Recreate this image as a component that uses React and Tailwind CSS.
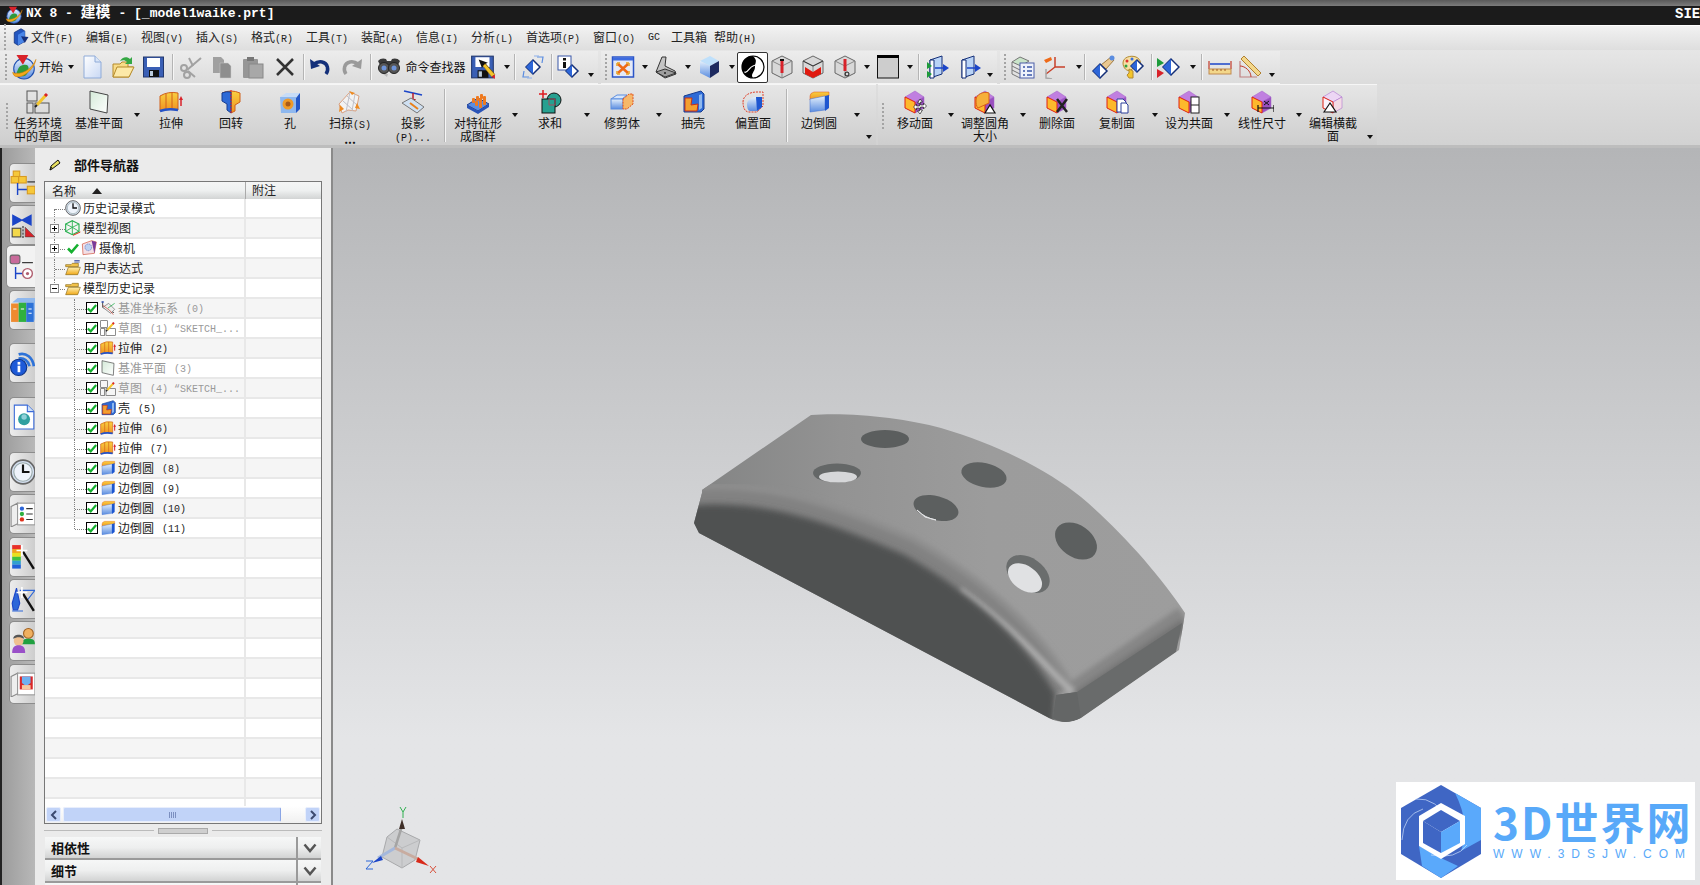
import React from 'react'

const Svg = ({ s = 24, children }) => (
  <svg width={s} height={s} viewBox="0 0 24 24" className="shrink-0">{children}</svg>
)

// toolbar icons
const Nx = ({ s = 26 }) => (
  <Svg s={s}>
    <circle cx="12" cy="13.5" r="9.5" fill="url(#gb)" stroke="#1f4fb0" />
    <path d="M5 18c2-5 2-7 7-8s5 4 3 8-8 3-10 0z" fill="#2f9a3c" />
    <path d="M1.5 17C8 20 19 15 23 5c-1 7-9 16-17 16-3 0-4-2-4.500-4z" fill="#f5a81c" stroke="#c97a08" strokeWidth=".5" />
    <path d="M5 1h11l-5 9z" fill="#d8222a" />
  </Svg>
)
const MenuIcon = () => (
  <Svg s={18}>
    <path d="M3 6l9-5 5 3v14l-9 5-5-3z" fill="#2256c0" stroke="#122f78" />
    <path d="M8 9l9-5v14l-9 5z" fill="#4a86e8" />
    <path d="M12 11l10 1-5 8z" fill="#16307c" />
  </Svg>
)
const NewDoc = () => (
  <Svg><path d="M4 1h11l6 6v16H4z" fill="url(#gd)" stroke="#8fabd8" /><path d="M15 1v6h6" fill="#d9e5f7" stroke="#8fabd8" /></Svg>
)
const OpenF = () => (
  <Svg>
    <path d="M2 9h7l2-2h6v5h5l-4 10H2z" fill="#f8dc88" stroke="#b58a2a" />
    <path d="M2 22l4-10h17l-5 10z" fill="#fce9a8" stroke="#b58a2a" />
    <path d="M9 6c2-4 7-5 10-2l2-2v7h-7l2-2c-2-2-4-2-7-1z" fill="#35a844" />
  </Svg>
)
const Floppy = () => (
  <>
    <rect x="1.500" y="2" width="20" height="20" fill="#3a5fb5" stroke="#22386e" />
    <rect x="5" y="3" width="13" height="9" fill="#fff" />
    <rect x="7" y="15" width="10" height="7" fill="#111" />
    <rect x="8" y="16" width="3" height="5" fill="#bcd" />
  </>
)
const Save = () => <Svg><Floppy /></Svg>
const SavePen = () => (
  <Svg s={26}>
    <Floppy />
    <path d="M8 5l3 8 1.500-2 8 9 2-2-8-9 2-1z" fill="#111" />
    <path d="M12 11l8 10 3-2-9-10z" fill="#f3c52c" stroke="#a36f08" strokeWidth=".5" />
    <path d="M20 21l3 2v-4z" fill="#d8222a" />
  </Svg>
)
const Cut = () => (
  <Svg>
    <path d="M8 15L22 3M9 16l7 6" stroke="#a2a2a2" strokeWidth="2" />
    <path d="M14 11l-4-8" stroke="#a2a2a2" strokeWidth="2" />
    <circle cx="5" cy="13" r="3" fill="none" stroke="#a2a2a2" strokeWidth="2" />
    <circle cx="8" cy="20" r="3" fill="none" stroke="#a2a2a2" strokeWidth="2" />
  </Svg>
)
const Copy = () => (
  <Svg>
    <path d="M3 2h8l3 3v13H3z" fill="#a0a0a0" />
    <path d="M10 8h8l3 3v12H10z" fill="#8e8e8e" stroke="#c8c8c8" strokeWidth=".5" />
  </Svg>
)
const Paste = () => (
  <Svg>
    <rect x="2" y="4" width="15" height="19" rx="1" fill="#969696" />
    <rect x="6" y="2" width="7" height="4" fill="#777" />
    <rect x="8" y="9" width="14" height="14" fill="#a8a8a8" stroke="#888" />
  </Svg>
)
const Del = () => (
  <Svg><path d="M4 4l16 16M20 4L4 20" stroke="#333" strokeWidth="2.500" /></Svg>
)
const Undo = ({ c = '#14307a' }) => (
  <Svg>
    <path d="M18 19c3-4 2-11-4-12-3-.5-6 .5-8 2" fill="none" stroke={c} strokeWidth="3.500" />
    <path d="M2 4l1 10 9-3z" fill={c} />
  </Svg>
)
const Redo = () => (
  <Svg>
    <path d="M6 19c-3-4-2-11 4-12 3-.5 6 .5 8 2" fill="none" stroke="#9a9a9a" strokeWidth="3.500" />
    <path d="M22 4l-1 10-9-3z" fill="#9a9a9a" />
  </Svg>
)
const Binoc = () => (
  <Svg>
    <path d="M1 6c2-3 6-3 8-2l1 2h4l1-2c2-1 6-1 8 2l-2 4H3z" fill="#3a3a3a" />
    <circle cx="7" cy="13" r="5.500" fill="#555" stroke="#222" />
    <circle cx="17" cy="13" r="5.500" fill="#555" stroke="#222" />
    <circle cx="7" cy="13" r="2.500" fill="#6d93d8" />
    <circle cx="17" cy="13" r="2.500" fill="#6d93d8" />
    <path d="M6 19l4 3 1-3z" fill="#bbb" />
  </Svg>
)
const Diamond = ({ x = 12, y = 12, r = 7 }) => (
  <>
    <path d={`M${x - r} ${y}L${x} ${y - r}L${x + r} ${y}L${x} ${y + r}Z`} fill="#fff" stroke="#142f78" strokeWidth="1.500" />
    <path d={`M${x - r} ${y}L${x} ${y - r}V${y + r}Z`} fill="#2d66d8" />
  </>
)
const Rotate = () => (
  <Svg>
    <Diamond r={7} />
    <path d="M16 2l6 0-1 6M8 22l-6 0 1-6" fill="none" stroke="#5b8de0" strokeWidth="1.200" />
    <path d="M13 1h5M6 23h5" stroke="#8fb1ea" strokeWidth="1" />
  </Svg>
)
const Info = () => (
  <Svg>
    <rect x="1" y="1" width="13" height="14" fill="#fff" stroke="#3856a8" />
    <rect x="6" y="3" width="3" height="2.500" fill="#111" />
    <rect x="6" y="7" width="3" height="6" fill="#111" />
    <Diamond x={15} y={16} r={6} />
  </Svg>
)
const Fit = () => (
  <Svg>
    <rect x="1.500" y="2" width="21" height="20" fill="#e4e9f7" stroke="#2b55c8" strokeWidth="1.500" />
    <rect x="2" y="2.500" width="20" height="3" fill="#3d6be0" />
    <path d="M7 9l10 9M17 9L7 18" stroke="#ee6a18" strokeWidth="2.500" />
    <path d="M6 8h3M6 8v3M18 8h-3M18 8v3M6 19h3M6 19v-3M18 19h-3M18 19v-3" stroke="#e8a020" strokeWidth="1.500" />
  </Svg>
)
const Cam3 = () => (
  <Svg>
    <path d="M2 17l6-15h4l-1 9 10 5 1 3-11 4z" fill="#c4c4c4" stroke="#333" />
    <path d="M2 17l9 5 11-4-11-4z" fill="#9d9d9d" stroke="#333" />
    <circle cx="11" cy="18" r="1" fill="#222" />
  </Svg>
)
const Cube = () => (
  <Svg>
    <path d="M3 6l10-5 9 5-9 5z" fill="#bfe0fb" />
    <path d="M3 6l10 5v12L3 18z" fill="url(#gb)" />
    <path d="M13 11l9-5v11l-9 6z" fill="#1d2a60" />
  </Svg>
)
const Wave = () => (
  <Svg>
    <circle cx="12" cy="12" r="11" fill="#000" />
    <path d="M12 1a11 11 0 0 1 0 22c-3-4 2-6 2-11s3-6-2-11z" fill="#fff" />
    <path d="M3 17c4 2 5-5 9-6s5-3 8-5" fill="none" stroke="#fff" strokeWidth="1.200" />
    <circle cx="12" cy="12" r="11" fill="none" stroke="#000" strokeWidth="1.200" />
  </Svg>
)
const Wire = ({ children }) => (
  <Svg>
    <path d="M12 1l10 5v12l-10 5-10-5V6z" fill="#d8d8d8" stroke="#666" />
    <path d="M2 6l10 5 10-5M12 11v12" fill="none" stroke="#888" />
    {children}
  </Svg>
)
const Win = () => (
  <Svg>
    <rect x="1.500" y="1" width="21" height="22" fill="#cdcdcd" stroke="#111" />
    <rect x="1" y="0" width="22" height="3" fill="#000" />
  </Svg>
)
const Sec = ({ hollow }) => (
  <Svg>
    <path d="M5 5l12-4v18L5 23z" fill="#b9d3f6" stroke="#142f78" />
    <path d="M5 5h4v18H5z" fill="#fff" stroke="#142f78" />
    {hollow && <path d="M2 7l5 4-5 3zM2 16l5 3-5 4z" fill="#1d9b3a" />}
    <path d="M10 13h9" stroke="#1b45c8" strokeWidth="1.500" />
    <path d="M18 9l6 4-6 4z" fill="#1b45c8" />
  </Svg>
)
const Layers = () => (
  <Svg>
    <path d="M1 7l8-5 9 4-8 5z" fill="#c9e4c9" stroke="#777" />
    <path d="M1 11l8 4M1 15l8 4M1 19l8 4M1 7v12" fill="none" stroke="#777" />
    <rect x="9" y="8" width="14" height="15" fill="#eef2fb" stroke="#4d5fa8" />
    <path d="M12 12h2M16 12h5M12 16h2M16 16h5M12 20h2M16 20h5" stroke="#3a55a8" strokeWidth="1.500" />
  </Svg>
)
const Axes = () => (
  <Svg>
    <path d="M12 12l10 0M12 12V2M12 12L3 19" stroke="#c8402a" strokeWidth="1.500" />
    <path d="M1 5l7-3 1 3-6 3z" fill="#ee6a18" />
    <path d="M3 19v4l6 1M3 14v5" stroke="#a8a8a8" strokeWidth="1.500" fill="none" />
  </Svg>
)
const Hand = () => (
  <Svg>
    <path d="M10 10L20 2l3 3-8 9z" fill="#eac890" stroke="#a07a40" />
    <circle cx="21" cy="3" r="2.500" fill="#5b8de0" />
    <Diamond x={9} y={16} r={7} />
  </Svg>
)
const Palette = () => (
  <Svg>
    <path d="M2 8c0-6 8-8 13-6s6 8 2 10-6 1-7 3c-4 2-8-2-8-7z" fill="#f5dfa4" stroke="#b38a30" />
    <circle cx="6" cy="6" r="1.500" fill="#e03030" />
    <circle cx="11" cy="4" r="1.500" fill="#3a70e0" />
    <circle cx="5" cy="11" r="1.500" fill="#30a040" />
    <Diamond x={16} y={11} r={6} />
    <path d="M8 14v4l-2 2 2 3h4v-7z" fill="#f3c52c" stroke="#b38a30" />
  </Svg>
)
const GreenDia = () => (
  <Svg>
    <path d="M1 3l7 5-7 4z" fill="#1d9b3a" />
    <path d="M1 14l7 4-7 5z" fill="#d8222a" />
    <Diamond x={15} y={12} r={8} />
  </Svg>
)
const Ruler = () => (
  <Svg>
    <path d="M1 6v8M23 6v8" stroke="#c23a2a" strokeWidth="1.200" />
    <path d="M2 9h20" stroke="#1b45c8" strokeWidth="1.500" />
    <rect x="1" y="14" width="22" height="5" fill="#f3d78a" stroke="#c08a50" />
    <path d="M5 14v2M9 14v2M13 14v2M17 14v2" stroke="#a05a20" />
  </Svg>
)
const Angle = () => (
  <Svg>
    <path d="M6 1L23 18l-3 3L3 4z" fill="#f3d78a" stroke="#b08030" />
    <path d="M2 6v16h17" fill="none" stroke="#c08080" strokeWidth="1.200" />
    <path d="M2 11c5 0 11 5 11 11" fill="none" stroke="#c23a2a" />
  </Svg>
)

// ribbon icons
const Sketch = ({ s = 24 }) => (
  <Svg s={s}>
    <rect x="1" y="1" width="10" height="10" fill="none" stroke="#555" />
    <rect x="1" y="13" width="6" height="10" fill="none" stroke="#555" />
    <rect x="9" y="13" width="14" height="10" fill="none" stroke="#555" />
    <path d="M11 15L20 5" stroke="#f3c52c" strokeWidth="3" />
    <path d="M19 6l2-2" stroke="#d8222a" strokeWidth="3" />
    <path d="M9 17l2-2" stroke="#222" strokeWidth="2" />
  </Svg>
)
const Plane = ({ s = 24 }) => (
  <Svg s={s}><path d="M3 1l18 4-1 18-17-4z" fill="url(#gp)" stroke="#444" /></Svg>
)
const Extrude = ({ s = 24 }) => (
  <Svg s={s}>
    <path d="M1 6Q9 1 19 3v17Q9 18 1 21z" fill="url(#go)" stroke="#d0601a" />
    <path d="M7 4v15M13 3v16" stroke="#d0601a" />
    <path d="M1 21Q9 18 19 20" fill="none" stroke="#2452c8" strokeWidth="2.500" />
    <path d="M22 16V9" stroke="#d8222a" strokeWidth="1.500" />
    <path d="M20 10l2-4 2 4z" fill="#d8222a" />
  </Svg>
)
const Revolve = () => (
  <Svg>
    <path d="M3 3Q12-1 21 3v9l-5 3v6l-4 2V2z" fill="url(#go)" stroke="#d0601a" />
    <path d="M3 3Q7 1 12 2v21l-4-3v-6l-5-3z" fill="#2e6ad6" stroke="#163c90" />
    <path d="M12 0v24" stroke="#d8222a" strokeDasharray="2 1" />
  </Svg>
)
const Hole = () => (
  <Svg>
    <path d="M2 7l6-4h14l-4 5z" fill="#c7dcf7" />
    <path d="M2 7h16v16H3z" fill="#8fb8ee" />
    <path d="M18 8l4-5v16l-4 4z" fill="#2356c6" />
    <circle cx="10" cy="14" r="5.500" fill="#ee9a28" />
    <circle cx="10" cy="14" r="2.500" fill="#a85a18" />
  </Svg>
)
const Sweep = () => (
  <Svg>
    <path d="M1 14L12 2l9 4-3 15-8-1-6 3z" fill="#f2f2f2" stroke="#d8a080" />
    <path d="M5 11l10 9M9 6l10 9M12 2l-4 20M17 4l-3 17" stroke="#c0c0c8" />
    <path d="M11 1l6 2-3 2zM19 13l3 6-5-1zM1 22l1-7 4 4z" fill="#ee8a20" />
  </Svg>
)
const Project = () => (
  <Svg>
    <path d="M3 1l18 4" stroke="#1b45c8" strokeWidth="1.500" />
    <path d="M12 3v8" stroke="#b81a2a" strokeWidth="1.500" />
    <path d="M9 9l3 4 3-4z" fill="#b81a2a" />
    <path d="M1 13l9-5 13 9-7 6z" fill="#cfe0f2" stroke="#777" />
    <path d="M9 13l8 6" stroke="#e8801c" strokeWidth="2" />
  </Svg>
)
const Pattern = () => (
  <Svg>
    <path d="M1 15l11-7 11 6-11 7z" fill="#5b8de0" stroke="#1d3c90" />
    <path d="M1 15v3l11 6 11-7v-3l-11 7z" fill="#2a54b8" />
    {[[7, 12], [11, 10], [15, 8], [10, 15], [14, 12], [18, 10], [14, 17], [18, 14]].map(([x, y], i) => (
      <rect key={i} x={x - 1} y={y - 4} width="3" height="5" rx="1" fill="#ee7a20" />
    ))}
  </Svg>
)
const Unite = () => (
  <Svg>
    <path d="M5 0v8M1 4h8" stroke="#e01a20" strokeWidth="1.500" />
    <circle cx="16" cy="10" r="7" fill="#27a090" stroke="#111" />
    <rect x="4" y="9" width="13" height="14" fill="#27a090" stroke="#111" />
    <path d="M11 9h6v6h-6z" fill="none" stroke="#a05060" />
  </Svg>
)
const Trim = () => (
  <Svg>
    <path d="M1 9l6-4h10l-5 4z" fill="#d8e6fa" stroke="#5b8de0" />
    <rect x="1" y="9" width="12" height="10" fill="url(#gb)" stroke="#5b8de0" />
    <path d="M13 9l6-5h4v10l-6 5h-4z" fill="#f6b86a" stroke="#e0501c" strokeDasharray="2 1" />
  </Svg>
)
const ShellI = ({ s = 24 }) => (
  <Svg s={s}>
    <path d="M3 6l17-5 3 3v15l-3 3H3z" fill="#2e6ad6" stroke="#163c90" />
    <path d="M4 8h7l-1 7 7-1-1 7H4z" fill="#f3a030" stroke="#c8301a" />
    <path d="M18 5v15l3-2V4z" fill="#8fb8ee" />
  </Svg>
)
const OffsetF = () => (
  <Svg>
    <path d="M2 12c0-6 6-10 14-10h6v14l-6 6H8c-4 0-6-4-6-10z" fill="none" stroke="#e0402a" strokeDasharray="2 1" />
    <path d="M6 14c0-4 5-7 9-7h6v10l-5 4H9c-2 0-3-3-3-7z" fill="url(#gb)" />
    <path d="M15 7h6v10l-5 4z" fill="#1d56d0" />
  </Svg>
)
const Blend = ({ s = 24 }) => (
  <Svg s={s}>
    <path d="M3 6q0-3 4-4l15 0v4L3 10z" fill="url(#go)" stroke="#e0501c" strokeWidth=".5" />
    <path d="M3 9l15-3v14l-15 2z" fill="url(#gb)" stroke="#3a6ad0" strokeWidth=".5" />
    <path d="M18 6l4-1v13l-4 3z" fill="#1d56d0" />
  </Svg>
)
const FaceBase = ({ children, pale }) => (
  <Svg>
    <path d="M2 7l10-6 9 6-9 5z" fill={pale ? '#ecd6f4' : '#c07fe0'} stroke="#a060c8" strokeWidth=".5" />
    <path d="M12 12l9-5v11l-9 5z" fill={pale ? '#f3dbe6' : '#9a50c0'} stroke="#a060c8" strokeWidth=".5" />
    <path d="M2 7l10 5v11L2 18z" fill={pale ? '#fbf2fb' : '#fdb92c'} stroke="#e02010" />
    {children}
  </Svg>
)
const Tri = () => <path d="M12 23l5-8 5 8z" fill="#fff" stroke="#111" strokeWidth="1.200" />
const MoveF = () => (
  <FaceBase>
    <path d="M17 9l2.500 3h-2v3h3v-2l3 3-3 3v-2h-3v3h2L17 24l-2.500-3h2v-3h-3v2l-3-3 3-3v2h3v-3h-2z" fill="#fff" stroke="#222" strokeWidth=".7" />
  </FaceBase>
)
const ResizeF = () => (
  <FaceBase>
    <path d="M3 10c0-6 8-9 13-7v10L5 18c-2-2-2-5-2-8z" fill="#f6b03a" stroke="#d8601a" />
    <Tri />
  </FaceBase>
)
const DelF = () => (
  <FaceBase><path d="M12 9l10 13M22 9L12 22" stroke="#222" strokeWidth="2.500" /></FaceBase>
)
const CopyF = () => (
  <FaceBase>
    <path d="M12 9h6l3 3v10h-9z" fill="#fff" stroke="#2b3f9a" />
    <path d="M16 13h5l2 2v8h-7z" fill="#fff" stroke="#2b3f9a" />
  </FaceBase>
)
const CoplaF = () => (
  <FaceBase><rect x="14" y="7" width="8" height="16" fill="#fff" stroke="#222" /><path d="M14 15h8" stroke="#222" /></FaceBase>
)
const LinF = () => (
  <FaceBase>
    <path d="M14 11l5 4M19 11l-5 4" stroke="#111" />
    <path d="M8 15v7M24 15v7M8 18h16" stroke="#111" strokeWidth="1.200" />
  </FaceBase>
)
const SecF = () => (
  <FaceBase pale><path d="M3 22l6-9 6 9z" fill="#fff" stroke="#111" strokeWidth="1.200" /></FaceBase>
)

// tree icons
const Clock = ({ s = 16 }) => (
  <Svg s={s}>
    <circle cx="12" cy="12" r="11" fill="#d4dff0" stroke="#666" strokeWidth="1.500" />
    <circle cx="12" cy="12" r="8.500" fill="#eef3fb" stroke="#9aa" />
    <path d="M12 5v7h6" fill="none" stroke="#111" strokeWidth="2" />
  </Svg>
)
const GreenCube = () => (
  <Svg s={16}>
    <path d="M11 1l10 5v11l-10 5L1 17V6z" fill="none" stroke="#28b050" strokeWidth="1.700" />
    <path d="M1 6l10 5 10-5M11 11v11M1 17l10-6 10 6M11 1v10" fill="none" stroke="#28b050" strokeWidth="1.300" />
    <path d="M12 23l11-5" stroke="#e0301a" strokeWidth="1.500" />
  </Svg>
)
const GreenCheck = ({ s = 12 }) => (
  <svg width={s} height={s} viewBox="0 0 12 12" className="shrink-0">
    <path d="M1 6.500L4.500 10 11 2.500" fill="none" stroke="#16b030" strokeWidth="2.600" />
  </svg>
)
const Check = () => (
  <span className="flex h-[12px] w-[12px] shrink-0 items-center justify-center border border-black bg-white">
    <GreenCheck s={10} />
  </span>
)
const Camera = () => (
  <Svg s={16}>
    <path d="M2 6l14-5 7 2-3 17L3 22z" fill="#f2dfe6" stroke="#d0503a" />
    <path d="M16 1l7 2-3 17z" fill="#7a3a9a" />
    <circle cx="11" cy="11" r="5" fill="#bcd0f0" stroke="#5570c0" strokeDasharray="2 1" />
  </Svg>
)
const Folder = ({ open }) => (
  <Svg s={16}>
    <path d="M1 7h8l2-2h9v5H1z" fill="#f2c24a" stroke="#8a6a1a" />
    <path d="M1 22l4-11h18l-4 11z" fill="url(#gf)" stroke="#8a6a1a" />
    {open && <path d="M14 3h8M14 0.800h8" stroke="#2b3f9a" strokeWidth="1.200" />}
  </Svg>
)
const Csys = () => (
  <Svg s={16}>
    <path d="M4 2v9L21 19" stroke="#222" strokeWidth="1.200" fill="none" />
    <path d="M4 11l9-6 9 9-6 6z" fill="#eee" stroke="#666" />
    <path d="M12 12l10-7" stroke="#28b050" strokeWidth="1.200" />
    <path d="M4 8l10 7 6 7" fill="none" stroke="#c23a2a" strokeWidth="1" />
    <path d="M2 3h4" stroke="#1b45c8" strokeWidth="1.500" />
  </Svg>
)

// side tabs
const Tree = ({ c = '#1b45c8' }) => <path d="M7 12v11M7 18h9" stroke={c} strokeWidth="1.300" fill="none" />
const TabAsm = () => (
  <Svg s={26}>
    <rect x="3" y="1" width="6" height="7" fill="#f6c83a" stroke="#d89a20" />
    <rect x="1" y="6" width="7" height="6" fill="#f6c83a" stroke="#d89a20" />
    <rect x="8" y="6" width="7" height="6" fill="#f6c83a" stroke="#d89a20" />
    <path d="M16 11h8" stroke="#222" />
    <Tree />
    <rect x="16" y="15" width="7" height="7" fill="#f6c83a" stroke="#d89a20" />
  </Svg>
)
const TabCon = () => (
  <Svg s={26}>
    <path d="M2 2l9 5 9-5v11l-9-5-9 5z" fill="#1b45c8" />
    <rect x="2" y="15" width="8" height="8" fill="#f3d84a" stroke="#444" />
    <path d="M14 23V14l9 9z" fill="#d8222a" stroke="#444" strokeWidth=".5" />
    <path d="M12 13v11" stroke="#222" strokeDasharray="2 1" />
  </Svg>
)
const TabPart = () => (
  <Svg s={26}>
    <rect x="2" y="1" width="9" height="8" rx="2" fill="#c86a9a" stroke="#666" />
    <path d="M13 8h10" stroke="#222" />
    <Tree />
    <circle cx="18" cy="18" r="4.500" fill="#fff" stroke="#b06070" strokeWidth="1.300" />
    <circle cx="18" cy="18" r="1.500" fill="#b06070" />
  </Svg>
)
const TabBooks = () => (
  <Svg s={26}>
    <rect x="1" y="6" width="7" height="17" fill="#ee8a30" />
    <rect x="8" y="5" width="7" height="18" fill="#30b040" />
    <rect x="15" y="5" width="7" height="18" fill="#2d72d8" />
    <path d="M2 5l5-4h17l-2 4zM22 5l2-4v17l-2 5z" fill="#8fb8ee" />
    <path d="M3 11h3M10 11h3M17 11h3M17 15h3" stroke="#fff" />
  </Svg>
)
const TabInfo = () => (
  <Svg s={26}>
    <path d="M8 4c7-2 13 3 14 11M8 8c5-1 9 2 10 7" fill="none" stroke="#2d72d8" strokeWidth="2.500" />
    <circle cx="8" cy="16" r="7.500" fill="#1d5ad8" stroke="#0c348a" />
    <rect x="7" y="11" width="2.500" height="2.500" fill="#fff" />
    <rect x="7" y="14.500" width="2.500" height="6" fill="#fff" />
  </Svg>
)
const TabDoc = () => (
  <Svg s={26}>
    <path d="M4 1h12l6 6v16H4z" fill="#fff" stroke="#3a6ad8" />
    <path d="M16 1v6h6" fill="#cfe0f8" stroke="#3a6ad8" />
    <circle cx="13" cy="14" r="5.500" fill="#30a0a0" />
    <circle cx="13" cy="12" r="2.500" fill="#8fd0d8" />
  </Svg>
)
const TabSteps = () => (
  <Svg s={26}>
    <path d="M1 5l6-3v19l-6 3z" fill="#eee" stroke="#888" />
    <rect x="7" y="2" width="16" height="20" fill="#fff" stroke="#999" />
    <circle cx="11" cy="7" r="2" fill="#2d66d8" />
    <circle cx="11" cy="12" r="2" fill="#30b040" />
    <circle cx="11" cy="17" r="2" fill="#e0301a" />
    <path d="M15 7h6M15 12h6M15 17h6" stroke="#333" />
  </Svg>
)
const Wand = () => (
  <>
    <path d="M12 7l10 16" stroke="#111" strokeWidth="2.200" />
    <path d="M11 1v10M6 6h10" stroke="#fff" strokeWidth="1.500" />
  </>
)
const TabRain = () => (
  <Svg s={26}>
    {['#e8302a', '#f0a020', '#e8e020', '#40c040', '#30a0d0', '#2060d8'].map((c, i) => (
      <rect key={c} x="2" y={1 + i * 3.600} width="8" height="3.700" fill={c} />
    ))}
    <Wand />
  </Svg>
)
const TabTower = () => (
  <Svg s={26}>
    <path d="M6 2l3 14-2 6H3l-1-6z" fill="#2d66d8" stroke="#1b45c8" />
    <path d="M2 23h10M9 4h14l-7 9" fill="none" stroke="#2d66d8" />
    <Wand />
  </Svg>
)
const TabPeople = () => (
  <Svg s={26}>
    <circle cx="17" cy="5" r="4.500" fill="#f0b060" stroke="#a06020" />
    <path d="M11 15c0-4 2-5 6-5s6 1 6 5z" fill="#20a040" />
    <circle cx="8" cy="12" r="4.500" fill="#f0c090" />
    <path d="M3 10c0-5 10-5 10 0-3-2-7-2-10 0z" fill="#555" />
    <path d="M2 23c0-5 2-7 6-7s6 2 6 7z" fill="#9a50c8" />
  </Svg>
)
const TabDoor = () => (
  <Svg s={26}>
    <path d="M1 5l6-3v19l-6 3z" fill="#eee" stroke="#888" />
    <rect x="7" y="2" width="16" height="20" fill="#fff" stroke="#999" />
    <rect x="9" y="5" width="12" height="12" fill="#d8282a" />
    <path d="M11 5h8v6l-4 3-4-3z" fill="#6fb0f0" />
    <rect x="11" y="13" width="8" height="4" fill="#f6c8a0" />
  </Svg>
)

const Caret = () => <span className="block h-0 w-0 border-x-[3.5px] border-t-[4px] border-x-transparent border-t-[#111]" />

const Mono = ({ children }) => <span className="font-['Liberation_Mono',monospace] text-[10px]">{children}</span>

const Grip = ({ className = '' }) => (
  <div className={`flex shrink-0 flex-col items-center justify-center gap-[2px] ${className}`}>
    {[0, 1, 2, 3, 4, 5, 6].map((i) => (
      <span key={i} className="h-[2px] w-[2px] bg-[#a4a4a4]" />
    ))}
  </div>
)

const Sep = ({ w }) => (
  <div className={`flex shrink-0 justify-center self-stretch py-[3px] ${w}`}>
    <span className="w-[2px] border-l border-[#b4b4b4] bg-[#f6f6f6]" />
  </div>
)

const Slot = ({ w, children }) => <div className={`flex shrink-0 items-center justify-center ${w}`}>{children}</div>

const LowCaret = ({ w }) => (
  <div className={`flex shrink-0 items-end justify-center self-stretch pb-[6px] ${w}`}><Caret /></div>
)

const menus = [
  ['文件', '(F)', 'w-[55px]'], ['编辑', '(E)', 'w-[55px]'], ['视图', '(V)', 'w-[55px]'], ['插入', '(S)', 'w-[55px]'],
  ['格式', '(R)', 'w-[55px]'], ['工具', '(T)', 'w-[55px]'], ['装配', '(A)', 'w-[55px]'], ['信息', '(I)', 'w-[55px]'],
  ['分析', '(L)', 'w-[55px]'], ['首选项', '(P)', 'w-[67px]'], ['窗口', '(O)', 'w-[55px]'],
]

const Ribbon = ({ w, icon, lines, caret }) => (
  <div className={`relative flex shrink-0 flex-col items-center pt-[4px] ${w}`}>
    {icon}
    <div className="mt-[2px] whitespace-nowrap text-center text-[12px] leading-[13px] text-[#111]">
      {lines.map((l, i) => <div key={i}>{l}</div>)}
    </div>
    {caret && <span className="absolute right-[2px] top-[27px]"><Caret /></span>}
  </div>
)

const rows = [
  { lvl: 0, line: 'first', icon: <Clock />, label: '历史记录模式' },
  { lvl: 0, exp: '+', icon: <GreenCube />, label: '模型视图' },
  { lvl: 0, exp: '+', tick: true, icon: <Camera />, label: '摄像机' },
  { lvl: 0, icon: <Folder open />, label: '用户表达式' },
  { lvl: 0, line: 'last', exp: '-', icon: <Folder />, label: '模型历史记录' },
  { lvl: 1, icon: <Csys />, label: '基准坐标系', tail: '(0)', gray: true },
  { lvl: 1, icon: <Sketch s={16} />, label: '草图', tail: '(1) “SKETCH_...', gray: true },
  { lvl: 1, icon: <Extrude s={16} />, label: '拉伸', tail: '(2)' },
  { lvl: 1, icon: <Plane s={16} />, label: '基准平面', tail: '(3)', gray: true },
  { lvl: 1, icon: <Sketch s={16} />, label: '草图', tail: '(4) “SKETCH_...', gray: true },
  { lvl: 1, icon: <ShellI s={16} />, label: '壳', tail: '(5)' },
  { lvl: 1, icon: <Extrude s={16} />, label: '拉伸', tail: '(6)' },
  { lvl: 1, icon: <Extrude s={16} />, label: '拉伸', tail: '(7)' },
  { lvl: 1, icon: <Blend s={16} />, label: '边倒圆', tail: '(8)' },
  { lvl: 1, icon: <Blend s={16} />, label: '边倒圆', tail: '(9)' },
  { lvl: 1, icon: <Blend s={16} />, label: '边倒圆', tail: '(10)' },
  { lvl: 1, line: 'last', icon: <Blend s={16} />, label: '边倒圆', tail: '(11)' },
]
const blanks = Array.from({ length: 14 }, (_, i) => i)

const Connector = ({ row }) => {
  const isTop = row.lvl === 0
  const vert = row.line === 'first' ? 'top-[10px] bottom-0' : row.line === 'last' ? 'top-0 h-[10px]' : 'top-0 bottom-0'
  return (
    <div className={`relative h-full shrink-0 ${isTop ? 'w-[20px]' : 'w-[41px]'}`}>
      <span className={`absolute border-l border-dotted border-[#808080] ${vert} ${isTop ? 'left-[9px]' : 'left-[29px]'}`} />
      <span className={`absolute top-[10px] right-0 border-t border-dotted border-[#808080] ${isTop ? 'left-[10px]' : 'left-[30px]'}`} />
      {row.exp && (
        <span className="absolute left-[5px] top-[5px] flex h-[9px] w-[9px] items-center justify-center border border-[#8a8a8a] bg-white">
          <span className="absolute h-px w-[5px] bg-black" />
          {row.exp === '+' && <span className="absolute h-[5px] w-px bg-black" />}
        </span>
      )}
    </div>
  )
}

const TreeRow = ({ row, odd }) => (
  <div className={`flex h-[20px] shrink-0 border-b-2 border-[#e8e8e8] ${odd ? 'bg-[#f5f5f5]' : 'bg-white'}`}>
    <div className="flex w-[201px] shrink-0 items-center border-r-2 border-[#e8e8e8] whitespace-pre text-[12px] leading-none">
      {row && <Connector row={row} />}
      {row && row.tick && <span className="ml-[2px] mr-[2px]"><GreenCheck /></span>}
      {row && row.lvl === 1 && <span className="mr-[2px]"><Check /></span>}
      {row && row.icon}
      {row && <span className={`ml-[2px] ${row.gray ? 'text-[#999]' : 'text-[#222]'}`}>{row.label}</span>}
      {row && row.tail && <span className={`ml-[8px] ${row.gray ? 'text-[#999]' : 'text-[#222]'}`}><Mono>{row.tail}</Mono></span>}
    </div>
  </div>
)

const tabs = [
  { m: 'mt-[15px]', icon: <TabAsm /> },
  { m: 'mt-[2px]', icon: <TabCon /> },
  { m: '', icon: <TabPart />, on: true },
  { m: 'mt-[2px]', icon: <TabBooks /> },
  { m: 'mt-[13px]', icon: <TabInfo /> },
  { m: 'mt-[14px]', icon: <TabDoc /> },
  { m: 'mt-[15px]', icon: <Clock s={26} /> },
  { m: 'mt-[2px]', icon: <TabSteps /> },
  { m: 'mt-[3px]', icon: <TabRain /> },
  { m: 'mt-[2px]', icon: <TabTower /> },
  { m: 'mt-[2px]', icon: <TabPeople /> },
  { m: 'mt-[3px]', icon: <TabDoor /> },
]

const Section = ({ title }) => (
  <div className="flex h-[23px] shrink-0 border-b-2 border-[#9a9a9a] bg-gradient-to-b from-[#f6f7f7] via-[#eeefef] to-[#d2d3d3]">
    <div className="w-[253px] border-r-2 border-[#9a9a9a] pl-[6px] text-[13px] font-bold leading-[21px] text-[#111]">{title}</div>
    <div className="flex flex-1 items-center justify-center">
      <svg width="14" height="10" viewBox="0 0 14 10"><path d="M1.500 1.500L7 8l5.500-6.500" fill="none" stroke="#555" strokeWidth="2.500" /></svg>
    </div>
  </div>
)

const ScrollBtn = ({ d }) => (
  <div className="flex h-[15px] w-[15px] shrink-0 items-center justify-center rounded-[2px] border border-[#e8eefc] bg-[#c1d3f8]">
    <svg width="8" height="10" viewBox="0 0 8 10"><path d={d} fill="none" stroke="#3c4a70" strokeWidth="2" /></svg>
  </div>
)

const Part = () => (
  <svg className="absolute inset-0" width="1367" height="737" viewBox="333 148 1367 737">
    <defs>
      <linearGradient id="top" x1="0" y1="0" x2="1" y2="0">
        <stop offset="0" stopColor="#838484" />
        <stop offset=".3" stopColor="#939393" />
        <stop offset=".6" stopColor="#9c9c9c" />
        <stop offset="1" stopColor="#9d9d9d" />
      </linearGradient>
      <clipPath id="body">
        <path d="M702 490L811 415C850 412 905 418 941 428C1000 445 1050 472 1081 497C1120 530 1160 575 1185 613L1179 650L1081 718Q1065 726 1049 718L699 533L694 523L702 493Z" />
      </clipPath>
      <filter id="soft" x="-10%" y="-10%" width="120%" height="120%"><feGaussianBlur stdDeviation="2.500" /></filter>
      <filter id="edge" x="-10%" y="-10%" width="120%" height="120%"><feGaussianBlur stdDeviation="3" /></filter>
    </defs>
    <path d="M702 490L811 415C850 412 905 418 941 428C1000 445 1050 472 1081 497C1120 530 1160 575 1185 613L1179 650L1081 718Q1065 726 1049 718L699 533L694 523L702 493Z" fill="url(#top)" />
    <g clipPath="url(#body)">
      <g filter="url(#soft)" fill="none">
        <path d="M698 505C770 500 835 525 905 555C970 592 1025 640 1056 695" stroke="#8e8e8e" strokeWidth="42" />
        <path d="M698 505C770 500 835 525 905 555C970 592 1025 640 1056 695" stroke="#828282" strokeWidth="30" />
        <path d="M960 590C1010 625 1045 665 1072 692" stroke="#b4b4b4" strokeWidth="5" />
        <path d="M1077 692L1185 618" stroke="#868686" strokeWidth="24" />
        <path d="M1077 698L1185 625" stroke="#747575" strokeWidth="14" />
      </g>
      <path d="M696 505C770 500 835 525 905 555C970 592 1025 640 1056 695L1053 740L1000 740L660 540L680 510Z" fill="#505151" filter="url(#edge)" />
      <path d="M1056 695L1077 692L1182 623L1176 652L1081 718Q1065 726 1053 718Z" fill="#696b6b" />
      <path d="M1056 695L1077 692L1081 718Q1065 726 1053 718Z" fill="#646666" />
    </g>
    <ellipse cx="885" cy="439" rx="24" ry="9" fill="#5b5e5e" />
    <ellipse cx="837" cy="473" rx="24" ry="9.500" fill="#646767" />
    <ellipse cx="838" cy="477" rx="19" ry="5.500" fill="#d6d7d9" />
    <ellipse cx="984" cy="475" rx="23" ry="12" transform="rotate(12 984 475)" fill="#5e6161" />
    <ellipse cx="936" cy="508" rx="23" ry="12" transform="rotate(15 936 508)" fill="#5c5f5f" />
    <path d="M917 510Q925 518 936 520L925 517Z" fill="#e4e5e7" stroke="#e4e5e7" strokeWidth="1" />
    <ellipse cx="1076" cy="541" rx="23" ry="16" transform="rotate(35 1076 541)" fill="#5c5f5f" />
    <ellipse cx="1028" cy="574" rx="24" ry="16" transform="rotate(35 1028 574)" fill="#6a6d6d" />
    <ellipse cx="1025" cy="578" rx="19" ry="12" transform="rotate(35 1025 578)" fill="#e0e1e3" />

    <path d="M387 837L397 829L420 840L415 860L402 868L382 857Z" fill="#c6c7c9" fillOpacity=".8" stroke="#a8a9ab" />
    <path d="M387 837L402 848L420 840M402 848L402 868" fill="none" stroke="#b8b9bb" />
    <path d="M395 848L402 826" stroke="#a4a4a4" strokeWidth="2.500" />
    <path d="M399 829l3-10 3 10z" fill="#3f2f28" />
    <path d="M395 848L378 858" stroke="#a4b8dc" strokeWidth="3" />
    <path d="M372 863l9-7 2 4z" fill="#1b45c8" />
    <path d="M395 848L418 859" stroke="#c8aca0" strokeWidth="3" />
    <path d="M429 866l-11-9-2 5z" fill="#d82a1a" />
    <path d="M400 807l3 5 3-5M403 812v6" fill="none" stroke="#30b050" />
    <path d="M366 861h7l-7 8h7" fill="none" stroke="#2d66d8" />
    <path d="M430 866l6 7M436 866l-6 7" fill="none" stroke="#d8503a" />
  </svg>
)

const Logo = () => (
  <div className="absolute left-[1063px] top-[634px] flex h-[98px] w-[299px] items-center bg-white pl-[5px]">
    <svg width="80" height="93" viewBox="0 0 80 93" className="shrink-0">
      <path d="M40 0L80 23V69L40 93L0 69V23Z" fill="#3f66c4" />
      <path d="M54 8L80 23V55L60 66Q70 40 54 8Z" fill="#5aa9fb" />
      <path d="M18 61L42 74L57 81L40 93L21 81Z" fill="#5aa9fb" />
      <path d="M15 14Q35 12 50 38M1 55Q2 30 22 24M66 60Q55 75 30 70" fill="none" stroke="#cfe0fb" strokeWidth=".7" />
      <path d="M40 18L64 31V59L40 74L18 61V31Z" fill="#fff" />
      <path d="M40 25L59 36L40 47L22 36Z" fill="#3f66c4" />
      <path d="M22 36L40 47V68L22 58Z" fill="#3f66c4" />
      <path d="M40 47L59 36V58L40 68Z" fill="#5aa9fb" />
    </svg>
    <div className="ml-[12px] flex flex-col items-start pb-[4px]">
      <div className="font-['Noto_Sans_CJK_SC',sans-serif] text-[44px] font-bold leading-[46px] tracking-[2px] text-[#58a9f9]">3D世界网</div>
      <div className="mt-[4px] font-['Liberation_Sans',sans-serif] text-[12px] leading-[13px] tracking-[7px] text-[#58a9f9]">WWW.3DSJW.COM</div>
    </div>
  </div>
)

export default function App() {
  return (
    <div className="relative flex h-[885px] w-[1700px] flex-col overflow-hidden bg-[#dcdcdc] font-['Noto_Sans_CJK_SC',sans-serif] text-[#111]">
      <svg className="absolute h-0 w-0">
        <defs>
          <linearGradient id="gb" x1="0" y1="0" x2="0" y2="1"><stop offset="0" stopColor="#e4f0fc" /><stop offset="1" stopColor="#5b8de0" /></linearGradient>
          <linearGradient id="go" x1="0" y1="0" x2="0" y2="1"><stop offset="0" stopColor="#f8d040" /><stop offset="1" stopColor="#f09020" /></linearGradient>
          <linearGradient id="gd" x1="0" y1="0" x2="1" y2="1"><stop offset="0" stopColor="#ffffff" /><stop offset="1" stopColor="#c8d8f4" /></linearGradient>
          <linearGradient id="gp" x1="0" y1="0" x2="1" y2="1"><stop offset="0" stopColor="#d4ead8" /><stop offset="1" stopColor="#ffffff" /></linearGradient>
          <linearGradient id="gf" x1="0" y1="0" x2="0" y2="1"><stop offset="0" stopColor="#fff0b0" /><stop offset="1" stopColor="#f0a818" /></linearGradient>
        </defs>
      </svg>

      {/* title bar */}
      <div className="h-[6px] shrink-0 bg-gradient-to-b from-[#5a5a5a] to-[#7c7c7c]" />
      <div className="flex h-[20px] shrink-0 items-center border-b border-white bg-[#1b1b1b] pb-[2px] pl-[5px] font-['Liberation_Mono','Noto_Sans_CJK_SC',monospace] text-[13px] font-bold text-white">
        <Nx s={18} />
        <span className="ml-[3px] whitespace-pre">NX 8 - <span className="text-[15px]">建模</span> - [_model1waike.prt]</span>
        <span className="ml-auto w-[25px] whitespace-nowrap text-[14px]">SIE</span>
      </div>

      {/* menu */}
      <div className="flex h-[24px] shrink-0 items-center bg-gradient-to-b from-[#f2f2f2] to-[#dedede] pb-[2px] text-[12px] text-[#222]">
        <Grip className="w-[10px]" />
        <div className="flex w-[21px] shrink-0 justify-center"><MenuIcon /></div>
        {menus.map(([name, key, w]) => (
          <div key={name} className={`shrink-0 whitespace-nowrap ${w}`}>{name}<Mono>{key}</Mono></div>
        ))}
        <div className="flex w-[66px] shrink-0 items-center whitespace-pre"><Mono>GC </Mono><span className="ml-[5px]">工具箱</span></div>
        <div className="shrink-0 whitespace-nowrap">帮助<Mono>(H)</Mono></div>
      </div>

      {/* standard toolbar row */}
      <div className="flex h-[34px] shrink-0 bg-gradient-to-b from-[#e6e6e6] to-[#dcdcdc] pt-px">
        <div className="flex w-[598px] shrink-0 items-stretch border-b border-[#f4f4f4] bg-gradient-to-b from-[#ececec] to-[#dcdcdc]">
          <Grip className="w-[12px]" />
          <Slot w="w-[24px]"><Nx /></Slot>
          <Slot w="w-[30px]"><span className="text-[12px]">开始</span></Slot>
          <Slot w="w-[10px]"><Caret /></Slot>
          <Slot w="w-[32px]"><NewDoc /></Slot>
          <Slot w="w-[30px]"><OpenF /></Slot>
          <Slot w="w-[32px]"><Save /></Slot>
          <Sep w="w-[6px]" />
          <Slot w="w-[30px]"><Cut /></Slot>
          <Slot w="w-[32px]"><Copy /></Slot>
          <Slot w="w-[30px]"><Paste /></Slot>
          <Slot w="w-[34px]"><Del /></Slot>
          <Sep w="w-[3px]" />
          <Slot w="w-[30px]"><Undo /></Slot>
          <Slot w="w-[34px]"><Redo /></Slot>
          <Sep w="w-[4px]" />
          <Slot w="w-[32px]"><Binoc /></Slot>
          <Slot w="w-[61px]"><span className="whitespace-nowrap text-[12px]">命令查找器</span></Slot>
          <Slot w="w-[34px]"><SavePen /></Slot>
          <Slot w="w-[14px]"><Caret /></Slot>
          <Sep w="w-[2px]" />
          <Slot w="w-[34px]"><Rotate /></Slot>
          <Sep w="w-[4px]" />
          <Slot w="w-[30px]"><Info /></Slot>
          <LowCaret w="w-[14px]" />
        </div>
        <div className="ml-[3px] flex w-[396px] shrink-0 items-stretch border-b border-[#f4f4f4] bg-gradient-to-b from-[#ececec] to-[#dcdcdc]">
          <Grip className="w-[10px]" />
          <Slot w="w-[24px]"><Fit /></Slot>
          <Slot w="w-[20px]"><Caret /></Slot>
          <Slot w="w-[22px]"><Cam3 /></Slot>
          <Slot w="w-[22px]"><Caret /></Slot>
          <Slot w="w-[20px]"><Cube /></Slot>
          <Slot w="w-[18px] pl-[8px]"><Caret /></Slot>
          <Slot w="w-[31px]">
            <span className="flex h-[31px] w-[31px] items-center justify-center rounded-[2px] border border-[#333] bg-white"><Wave /></span>
          </Slot>
          <Slot w="w-[28px]"><Wire><path d="M12 5v13" stroke="#d8222a" strokeWidth="3" /><path d="M10 5h4" stroke="#111" strokeWidth="2" /></Wire></Slot>
          <Slot w="w-[34px]"><Wire><path d="M4 12l8 5 8-5v7l-8 4-8-4z" fill="#e01a10" /><path d="M2 6l10 5 10-5" fill="none" stroke="#333" /></Wire></Slot>
          <Slot w="w-[30px]"><Wire><path d="M12 4v12" stroke="#d8222a" strokeWidth="3" /><circle cx="14" cy="19" r="2" fill="none" stroke="#111" /></Wire></Slot>
          <Slot w="w-[14px]"><Caret /></Slot>
          <Slot w="w-[28px]"><Win /></Slot>
          <Slot w="w-[15px]"><Caret /></Slot>
          <Sep w="w-[4px]" />
          <Slot w="w-[32px]"><Sec hollow /></Slot>
          <Slot w="w-[32px]"><Sec /></Slot>
          <LowCaret w="w-[10px]" />
        </div>
        <div className="ml-[3px] flex w-[280px] shrink-0 items-stretch border-b border-[#f4f4f4] bg-gradient-to-b from-[#ececec] to-[#dcdcdc]">
          <Grip className="w-[10px]" />
          <Slot w="w-[26px]"><Layers /></Slot>
          <Slot w="w-[38px]"><Axes /></Slot>
          <Slot w="w-[9px]"><Caret /></Slot>
          <Sep w="w-[4px]" />
          <Slot w="w-[32px]"><Hand /></Slot>
          <Slot w="w-[28px]"><Palette /></Slot>
          <Sep w="w-[10px]" />
          <Slot w="w-[22px]"><GreenDia /></Slot>
          <Slot w="w-[21px] pl-[7px]"><Caret /></Slot>
          <Sep w="w-[4px]" />
          <Slot w="w-[32px]"><Ruler /></Slot>
          <Slot w="w-[28px]"><Angle /></Slot>
          <LowCaret w="w-[16px]" />
        </div>
      </div>

      {/* feature ribbon */}
      <div className="flex h-[61px] shrink-0 bg-gradient-to-b from-[#dedede] to-[#d2d2d2]">
        <div className="flex w-[876px] shrink-0 items-stretch border-t border-[#f6f6f6] bg-gradient-to-b from-[#e6e6e6] to-[#cecece] pt-px">
          <Grip className="w-[14px]" />
          <Ribbon w="w-[48px]" icon={<Sketch />} lines={['任务环境', '中的草图']} />
          <Ribbon w="w-[80px] pr-[6px]" icon={<Plane />} lines={['基准平面']} caret />
          <Ribbon w="w-[58px]" icon={<Extrude />} lines={['拉伸']} />
          <Ribbon w="w-[62px]" icon={<Revolve />} lines={['回转']} />
          <Ribbon w="w-[56px]" icon={<Hole />} lines={['孔']} />
          <Ribbon w="w-[64px]" icon={<Sweep />} lines={[<>扫掠<Mono>(S)</Mono></>, <span className="font-bold">...</span>]} />
          <Ribbon w="w-[62px]" icon={<Project />} lines={['投影', <Mono>(P)...</Mono>]} />
          <Sep w="w-[2px]" />
          <Ribbon w="w-[74px] pr-[10px]" icon={<Pattern />} lines={['对特征形', '成图样']} caret />
          <Ribbon w="w-[72px] pr-[12px]" icon={<Unite />} lines={['求和']} caret />
          <Ribbon w="w-[72px] pr-[12px]" icon={<Trim />} lines={['修剪体']} caret />
          <Ribbon w="w-[58px]" icon={<ShellI />} lines={['抽壳']} />
          <Ribbon w="w-[62px]" icon={<OffsetF />} lines={['偏置面']} />
          <Sep w="w-[6px]" />
          <Ribbon w="w-[72px] pr-[14px]" icon={<Blend />} lines={['边倒圆']} caret />
          <LowCaret w="w-[14px]" />
        </div>
        <div className="ml-[2px] flex w-[499px] shrink-0 items-stretch border-t border-[#f6f6f6] bg-gradient-to-b from-[#e6e6e6] to-[#cecece] pt-px">
          <Grip className="w-[10px]" />
          <Ribbon w="w-[68px] pr-[14px]" icon={<MoveF />} lines={['移动面']} caret />
          <Ribbon w="w-[72px] pr-[14px]" icon={<ResizeF />} lines={['调整圆角', '大小']} caret />
          <Ribbon w="w-[58px]" icon={<DelF />} lines={['删除面']} />
          <Ribbon w="w-[74px] pr-[12px]" icon={<CopyF />} lines={['复制面']} caret />
          <Ribbon w="w-[72px] pr-[14px]" icon={<CoplaF />} lines={['设为共面']} caret />
          <Ribbon w="w-[72px] pr-[12px]" icon={<LinF />} lines={['线性尺寸']} caret />
          <Ribbon w="w-[58px]" icon={<SecF />} lines={['编辑横截', '面']} />
          <LowCaret w="w-[15px]" />
        </div>
      </div>
      <div className="h-[3px] shrink-0 bg-[#bdbdbd]" />

      {/* main area */}
      <div className="flex min-h-0 flex-1">
        <div className="flex w-[35px] shrink-0 flex-col items-end border-l-[2px] border-[#222] bg-gradient-to-r from-[#9c9c9c] to-[#b8b8b8]">
          {tabs.map((t, i) => (
            <div
              key={i}
              className={`flex shrink-0 items-center justify-center rounded-l-[5px] border border-r-0 border-[#8c8c8c] ${t.m} ${t.on ? 'z-10 h-[43px] w-[29px] bg-[#f2f2f2]' : 'h-[40px] w-[26px] bg-gradient-to-r from-[#ededed] to-[#cdcdcd]'}`}
            >
              {t.icon}
            </div>
          ))}
        </div>

        <div className="flex w-[298px] shrink-0 flex-col border-r-2 border-[#8a8a8a] bg-[#ebebeb] pl-[9px]">
          <div className="flex h-[33px] shrink-0 items-center pl-[5px]">
            <svg width="12" height="12" viewBox="0 0 12 12" className="shrink-0">
              <path d="M1 11l2-1 8-6-2-3-7 6z" fill="#e8e060" stroke="#111" />
              <path d="M1 11l2-3" stroke="#111" />
            </svg>
            <span className="ml-[13px] text-[13px] font-bold text-[#111]">部件导航器</span>
          </div>

          <div className="flex h-[643px] w-[278px] shrink-0 flex-col border border-[#777] bg-white">
            <div className="flex h-[17px] shrink-0 bg-gradient-to-b from-[#f4f5f5] via-[#eef0f0] to-[#d2d4d4] text-[12px] leading-[16px] text-[#222]">
              <div className="flex w-[201px] shrink-0 items-center border-r border-[#aaa] pl-[7px]">
                名称
                <span className="ml-[16px] h-0 w-0 border-x-[5px] border-b-[6px] border-x-transparent border-b-[#222]" />
              </div>
              <div className="pl-[6px]">附注</div>
            </div>
            <div className="min-h-0 flex-1 overflow-hidden">
              {rows.map((r, i) => <TreeRow key={i} row={r} odd={i % 2 === 1} />)}
              {blanks.map((i) => <TreeRow key={i} odd={(i + rows.length) % 2 === 1} />)}
            </div>
            <div className="flex h-[17px] shrink-0 items-center bg-gradient-to-b from-white to-[#f0f0f0] px-[1px]">
              <ScrollBtn d="M6 1L2 5l4 4" />
              <div className="ml-[2px] flex h-[15px] w-[218px] shrink-0 items-center justify-center gap-px rounded-[2px] border border-[#e8eefc] border-r-[#8aa5e5] bg-[#c1d3f8]">
                {[0, 1, 2, 3].map((i) => <span key={i} className="h-[6px] w-px bg-[#7c8fc0]" />)}
              </div>
              <div className="flex-1" />
              <ScrollBtn d="M2 1l4 4-4 4" />
            </div>
          </div>

          <div className="flex h-[13px] w-[278px] shrink-0 items-center">
            <span className="h-px flex-1 bg-[#bbb]" />
            <span className="mx-[4px] h-[6px] w-[50px] border border-[#aaa] bg-[#cfcfcf]" />
            <span className="h-px flex-1 bg-[#bbb]" />
          </div>
          <div className="flex w-[277px] flex-col pl-px">
            <Section title="相依性" />
            <Section title="细节" />
            <Section title="" />
          </div>
        </div>

        <div className="relative min-w-0 flex-1 bg-gradient-to-b from-[#b4b5b7] to-[#e4e5e7] to-80%">
          <Part />
          <Logo />
        </div>
      </div>
    </div>
  )
}
